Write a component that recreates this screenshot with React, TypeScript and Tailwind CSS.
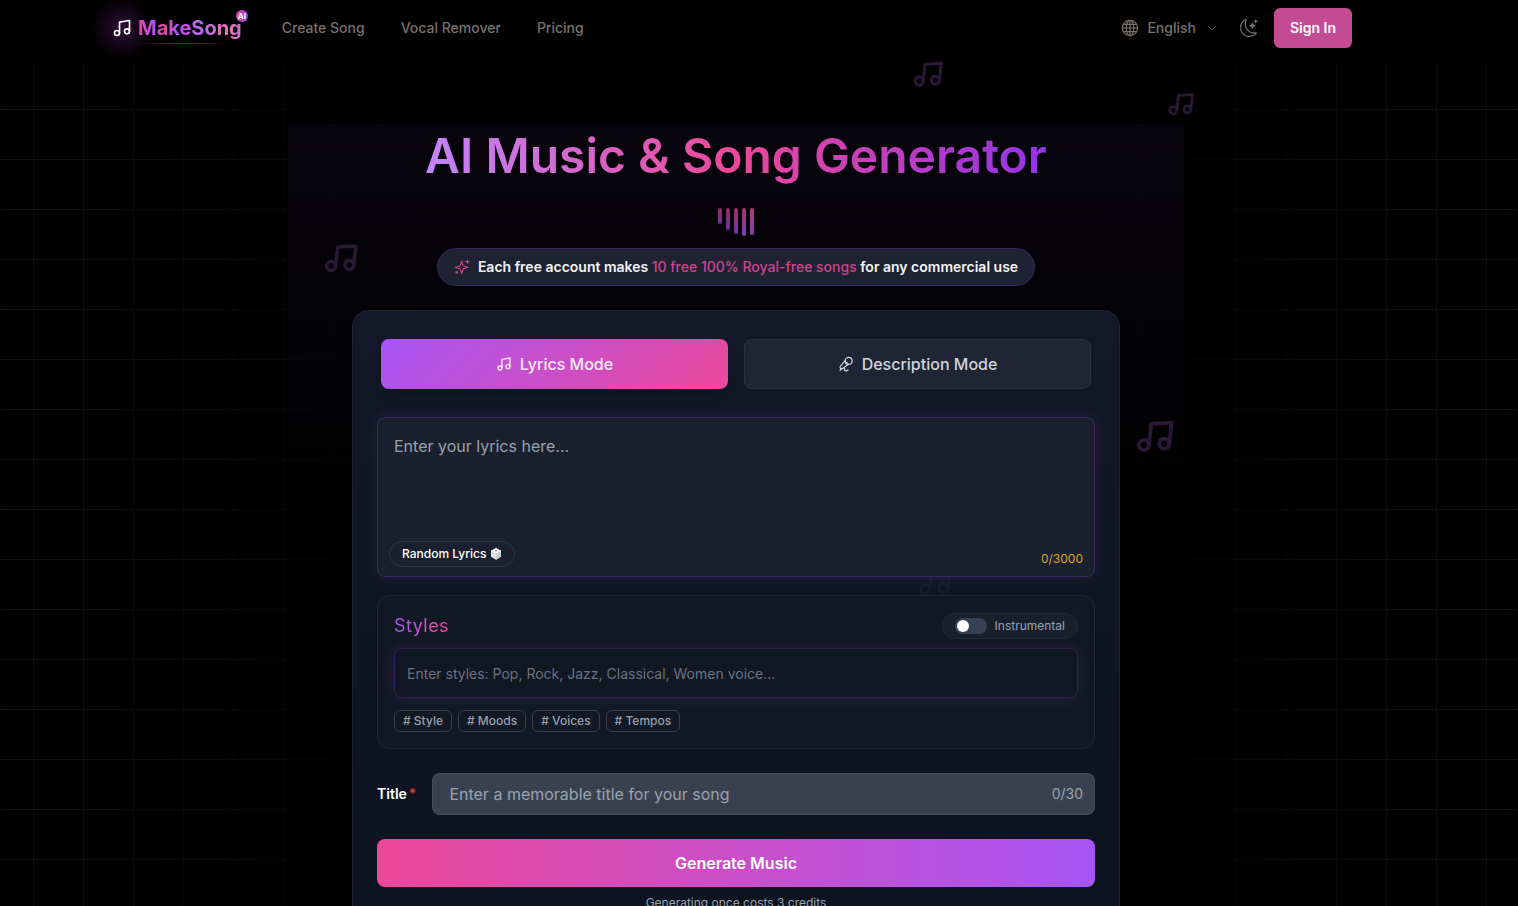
import type { SVGProps } from "react";
import { ChevronDown } from "lucide-react";

const navLinks = [
  { href: "#create", label: "Create Song" },
  { href: "#vocal-remover", label: "Vocal Remover" },
  { href: "#pricing", label: "Pricing" },
];

const tags = ["# Style", "# Moods", "# Voices", "# Tempos"];

const bars = [
  "h-4 opacity-60",
  "h-[22px] opacity-60",
  "h-[26px] opacity-65",
  "h-7 opacity-70",
  "h-[27px] opacity-75",
];

const floatingNotes = [
  "left-[912px] top-[58px] size-8",
  "left-[1167px] top-[90px] size-7",
  "left-[323px] top-[240px] size-9",
  "left-[1135px] top-[416px] size-10",
];

function NoteIcon(props: SVGProps<SVGSVGElement>) {
  return (
    <svg viewBox="0 0 24 24" fill="none" stroke="currentColor" strokeWidth="2" strokeLinejoin="round" {...props}>
      <path d="M9 18V5l12-2v13" />
      <circle cx="6" cy="18" r="3" />
      <circle cx="18" cy="16" r="3" />
    </svg>
  );
}

function GlobeIcon() {
  return (
    <svg viewBox="0 0 18 18" className="size-[18px]" fill="none" stroke="currentColor" strokeWidth="1.2">
      <circle cx="9" cy="9" r="7.7" />
      <ellipse cx="9" cy="9" rx="3.7" ry="7.7" />
      <path d="M9 1.3v15.4M1.3 9h15.4M2.5 5.300h13M2.500 12.700h13" />
    </svg>
  );
}

function MoonIcon() {
  return (
    <svg viewBox="0 0 16 16" className="size-[18px]" fill="currentColor">
      <path d="M6 .278a.77.77 0 0 1 .08.858 7.2 7.2 0 0 0-.878 3.46c0 4.021 3.278 7.277 7.318 7.277q.792-.001 1.533-.16a.79.79 0 0 1 .81.316.73.73 0 0 1-.031.893A8.35 8.35 0 0 1 8.344 16C3.734 16 0 12.286 0 7.71 0 4.266 2.114 1.312 5.124.06A.75.75 0 0 1 6 .278M4.858 1.311A7.27 7.27 0 0 0 1.025 7.71c0 4.02 3.279 7.276 7.319 7.276a7.32 7.32 0 0 0 5.205-2.162q-.506.063-1.029.063c-4.61 0-8.343-3.714-8.343-8.29 0-1.167.242-2.278.681-3.286" />
      <path d="M10.794 3.148a.217.217 0 0 1 .412 0l.387 1.162c.173.518.579.924 1.097 1.097l1.162.387a.217.217 0 0 1 0 .412l-1.162.387a1.73 1.73 0 0 0-1.097 1.097l-.387 1.162a.217.217 0 0 1-.412 0l-.387-1.162A1.73 1.73 0 0 0 9.31 6.593l-1.162-.387a.217.217 0 0 1 0-.412l1.162-.387a1.73 1.73 0 0 0 1.097-1.097zM13.863.099a.145.145 0 0 1 .274 0l.258.774c.115.346.386.617.732.732l.774.258a.145.145 0 0 1 0 .274l-.774.258a1.16 1.16 0 0 0-.732.732l-.258.774a.145.145 0 0 1-.274 0l-.258-.774a1.16 1.16 0 0 0-.732-.732l-.774-.258a.145.145 0 0 1 0-.274l.774-.258c.346-.115.617-.386.732-.732z" />
    </svg>
  );
}

function SparklesIcon() {
  return (
    <svg
      viewBox="0 0 24 24"
      className="size-4 text-[#d0428c]"
      fill="none"
      stroke="currentColor"
      strokeWidth="1.7"
      strokeLinecap="round"
      strokeLinejoin="round"
    >
      <path d="M11.500 3l2 6.500c.2.600.6.900 1 1l6.500 2-6.500 2c-.4.100-.8.500-1 1l-2 6.500-2-6.500c-.2-.500-.6-.900-1-1L2 12.500l6.500-2c.4-.1.800-.4 1-1z" />
      <path d="M20 1.500v5M17.500 4h5" />
      <circle cx="4" cy="20" r="1.200" />
    </svg>
  );
}

function MicIcon() {
  return (
    <svg
      viewBox="0 0 16 16"
      className="size-4"
      fill="none"
      stroke="currentColor"
      strokeWidth="1.2"
      strokeLinecap="round"
      strokeLinejoin="round"
    >
      <circle cx="10.600" cy="4.900" r="3.500" />
      <path d="M7.100 4.600L2.700 9.800c-1 1.300-.8 2.400.1 2.900 1.200.5 2.300-.3 3.400-1.400l4.200-2.900" />
      <path d="M7.200 6c1.200.3 2.600 1.200 3.200 2.400M2 14.600c.6-2.400 3.500-3 5-1.500M6.200 14.200c1.300.8 2.800.8 3.800-.2" />
    </svg>
  );
}

function DiceIcon() {
  return (
    <svg viewBox="0 0 12 12" className="size-3">
      <path d="M6 .3l5 2.500v6L6 11.800 1 8.800v-6z" fill="#e5e5e5" />
      <path d="M6 .3l5 2.500-5 2.700-5-2.700z" fill="#fff" />
      <path d="M6 5.500l5-2.700v6L6 11.800z" fill="#d4d4d4" />
      <circle cx="6" cy="2.800" r=".8" fill="#dc2626" />
      <g fill="#777">
        <circle cx="2.500" cy="5.500" r=".4" />
        <circle cx="4.400" cy="8.800" r=".4" />
        <circle cx="7.500" cy="7" r=".4" />
        <circle cx="9.500" cy="6" r=".4" />
        <circle cx="7.500" cy="9.500" r=".4" />
        <circle cx="9.500" cy="8.300" r=".4" />
      </g>
    </svg>
  );
}

function Backdrop() {
  return (
    <div aria-hidden="true" className="absolute inset-x-0 top-16 bottom-0 flex justify-between">
      <div className="w-[28%] bg-[linear-gradient(to_right,#101010_1px,transparent_1px),linear-gradient(to_bottom,#161616_1px,transparent_1px)] bg-[size:50px_50px] bg-[position:33px_45px] [mask-image:linear-gradient(to_right,black,transparent)]" />
      <div className="w-[28%] bg-[linear-gradient(to_left,#131313_1px,transparent_1px),linear-gradient(to_bottom,#161616_1px,transparent_1px)] bg-[size:50px_50px] bg-[position:right_31px_top_45px] [mask-image:linear-gradient(to_left,black,transparent)]" />
    </div>
  );
}

function Header() {
  return (
    <header className="relative mx-auto flex h-14 max-w-7xl items-center justify-between pr-6 pl-4">
      <div className="flex items-center">
        <a href="#home" className="relative flex items-center gap-1.5">
          <span className="absolute top-1/2 left-2.5 size-16 -translate-x-1/2 -translate-y-1/2 rounded-full bg-[radial-gradient(circle,#2c0b34,transparent_70%)]" />
          <NoteIcon className="relative size-5 text-white" />
          <span className="relative bg-[linear-gradient(to_right,#ec4899,#a855f7_17%,#ec4899_24%,#a855f7_37%,#d946ef_46%,#b070f0_60%,#d56cc4_75%,#f472b6_88%,#c06cd8)] bg-clip-text text-xl font-bold text-transparent">
            MakeSong
          </span>
          <span className="absolute -top-1 -right-1.5 flex size-3 items-center justify-center rounded-full bg-linear-to-r from-[#ec4899] to-[#9333ea] text-[8px] font-bold text-white">
            AI
          </span>
          <span className="absolute -bottom-0.5 left-6 h-px w-24 bg-linear-to-r from-transparent via-[#7a2450] to-transparent" />
        </a>
        <nav className="ml-10 flex gap-9 text-sm font-medium text-stone-500">
          {navLinks.map((link) => (
            <a key={link.href} href={link.href}>
              {link.label}
            </a>
          ))}
        </nav>
      </div>
      <div className="flex items-center text-stone-500">
        <button type="button" className="flex items-center text-sm font-medium">
          <GlobeIcon />
          <span className="ml-2">English</span>
          <ChevronDown className="ml-2 size-4" strokeWidth={1.2} />
        </button>
        <button type="button" aria-label="Toggle theme" className="ml-5">
          <MoonIcon />
        </button>
        <button type="button" className="ml-4 h-10 rounded-md bg-[#c34b94] px-4 text-sm font-semibold text-white">
          Sign In
        </button>
      </div>
    </header>
  );
}

function ModeTabs() {
  return (
    <div className="mx-1 grid grid-cols-2 gap-4">
      <button
        type="button"
        className="flex h-[50px] items-center justify-center gap-2 rounded-lg bg-[linear-gradient(135deg,#a855f7,#ec4899)] font-medium text-white/90 shadow-lg"
      >
        <NoteIcon className="size-4" />
        Lyrics Mode
      </button>
      <button
        type="button"
        className="flex h-[50px] items-center justify-center gap-2 rounded-lg border border-[#2d3344] bg-[#202536] font-medium text-gray-300"
      >
        <MicIcon />
        Description Mode
      </button>
    </div>
  );
}

function LyricsBox() {
  return (
    <div className="relative mt-7">
      <textarea
        aria-label="Lyrics"
        placeholder="Enter your lyrics here..."
        className="block h-40 w-full resize-none rounded-lg border border-[#3a2960] bg-[#1a212e] p-4 text-base text-white shadow-[0_0_15px_rgba(168,85,247,0.15)] outline-none placeholder:text-gray-400"
      />
      <button
        type="button"
        className="absolute bottom-2.5 left-3 flex h-[26px] items-center gap-1 rounded-full border border-[#2e3543] px-3 text-xs font-medium text-white"
      >
        Random Lyrics
        <DiceIcon />
      </button>
      <span className="absolute right-3 bottom-2.5 text-xs text-[#d9a521]">0/3000</span>
    </div>
  );
}

function StylesPanel() {
  return (
    <section className="mt-[18px] rounded-xl border border-[#202937] bg-[#121824] p-4">
      <div className="flex h-7 items-center justify-between">
        <h2 className="bg-linear-to-r from-[#a855f7] to-[#ec4899] bg-clip-text text-lg tracking-wide text-transparent">
          Styles
        </h2>
        <label className="flex h-[26px] items-center gap-2 rounded-full border border-[#202937] bg-[#18202c] px-3 text-xs text-gray-400">
          <input
            type="checkbox"
            role="switch"
            className="relative h-4 w-8 appearance-none rounded-full bg-gray-700 before:absolute before:top-0.5 before:left-0.5 before:size-3 before:rounded-full before:bg-white checked:bg-purple-500 checked:before:left-[18px]"
          />
          Instrumental
        </label>
      </div>
      <input
        type="text"
        aria-label="Styles"
        placeholder="Enter styles: Pop, Rock, Jazz, Classical, Women voice..."
        className="mt-2 block h-[50px] w-full rounded-lg border border-[#321f54] bg-[#111723] px-3 text-sm text-white shadow-[0_0_15px_rgba(168,85,247,0.15)] outline-none placeholder:text-gray-500"
      />
      <div className="mt-3 flex gap-1.5">
        {tags.map((tag) => (
          <button
            key={tag}
            type="button"
            className="h-[22px] rounded-md border border-gray-700 px-2 text-xs font-medium text-gray-400"
          >
            {tag}
          </button>
        ))}
      </div>
    </section>
  );
}

function GeneratorCard() {
  return (
    <form className="relative isolate mt-6 w-full max-w-3xl rounded-2xl border border-[#1c2536] bg-linear-to-b from-[#141829] via-[#0f1623] via-35% to-[#0d1420] px-6 pt-7 pb-10">
      <NoteIcon aria-hidden="true" className="absolute top-[252px] left-[564px] -z-10 size-9 rotate-6 text-[#161b2c]" />
      <ModeTabs />
      <LyricsBox />
      <StylesPanel />
      <div className="mt-6 flex items-center gap-4">
        <label htmlFor="title" className="text-sm font-semibold text-white">
          Title<span className="ml-0.5 text-[#dc3a3a]">*</span>
        </label>
        <div className="relative flex-1">
          <input
            id="title"
            type="text"
            placeholder="Enter a memorable title for your song"
            className="block h-[42px] w-full rounded-lg border border-gray-600/70 bg-[#394150] pr-16 pl-4 text-base text-white outline-none placeholder:text-gray-400"
          />
          <span className="absolute top-1/2 right-3 -translate-y-1/2 text-sm text-gray-400">0/30</span>
        </div>
      </div>
      <button
        type="button"
        className="mt-6 h-12 w-full rounded-lg bg-[linear-gradient(to_right,#ec4899,#a855f7)] font-semibold text-white"
      >
        Generate Music
      </button>
      <p className="mt-2 text-center text-xs text-gray-400">Generating once costs 3 credits</p>
    </form>
  );
}

export default function App() {
  return (
    <div className="relative h-screen overflow-hidden bg-black pr-[46px] font-[Inter,sans-serif]">
      <Backdrop />
      <Header />
      <main className="relative mx-auto mt-[68px] flex max-w-4xl flex-col items-center bg-[linear-gradient(to_bottom,#07040c,transparent_400px)]">
        <h1 className="mt-0.5 bg-[linear-gradient(to_right,#c084fc,#ec4899,#9333ea)] bg-clip-text text-5xl leading-[60px] font-semibold text-transparent">
          AI Music &amp; Song Generator
        </h1>
        <div aria-hidden="true" className="mt-[22px] flex h-7 gap-1">
          {bars.map((bar) => (
            <span key={bar} className={`w-1 rounded-full bg-[linear-gradient(to_top,#a855f7,#ec4899)] ${bar}`} />
          ))}
        </div>
        <p className="mt-3 flex h-[38px] items-center gap-2 rounded-full border border-[#3a2960] bg-[#1f2233] px-4 text-sm font-semibold text-gray-100">
          <SparklesIcon />
          <span>
            Each free account makes <span className="font-medium text-[#d0428c]">10 free 100% Royal-free songs</span> for any
            commercial use
          </span>
        </p>
        <GeneratorCard />
      </main>
      <div aria-hidden="true">
        {floatingNotes.map((note) => (
          <NoteIcon key={note} strokeWidth={2.3} className={`absolute rotate-6 text-[#2a1836] ${note}`} />
        ))}
      </div>
    </div>
  );
}
